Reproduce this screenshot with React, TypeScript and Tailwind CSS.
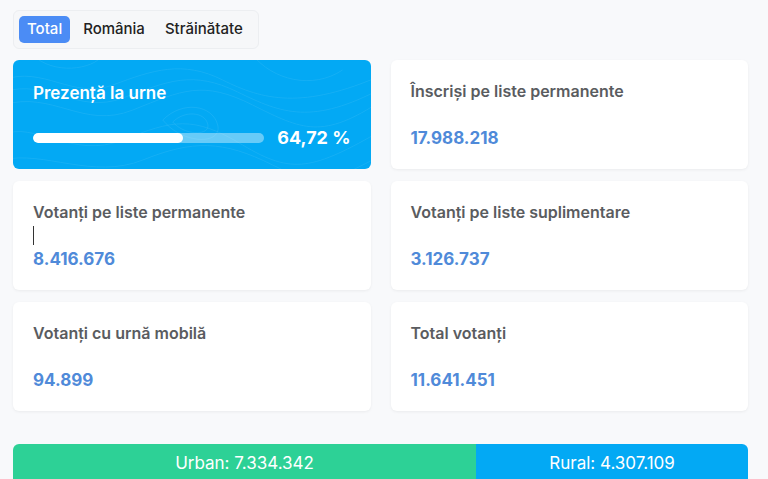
import { useState } from "react";

const stats = [
    { label: "Înscriși pe liste permanente", value: "17.988.218" },
    { label: "Votanți pe liste permanente", value: "8.416.676", caret: true },
    { label: "Votanți pe liste suplimentare", value: "3.126.737" },
    { label: "Votanți cu urnă mobilă", value: "94.899" },
    { label: "Total votanți", value: "11.641.451" },
];

function Topo() {
    // fundal decorativ cu linii de nivel
    return (
        <svg className="absolute inset-0 w-full h-full" viewBox="0 0 358 109" preserveAspectRatio="none" fill="none" stroke="white" strokeOpacity="0.08" strokeWidth="1">
            <path d="M-10 20 C 30 5, 60 40, 100 25 S 170 0, 210 20 S 290 50, 370 15" />
            <path d="M-10 32 C 35 18, 65 55, 110 38 S 180 10, 225 32 S 300 65, 370 28" />
            <path d="M-10 45 C 40 30, 70 70, 120 50 S 190 20, 240 45 S 310 80, 370 40" />
            <path d="M-10 75 C 20 60, 60 100, 110 80 S 180 55, 230 85 S 300 110, 370 70" />
            <path d="M-10 100 C 30 90, 80 120, 130 100 S 210 80, 260 105 S 320 120, 370 95" />
            <path d="M240 -5 C 260 20, 300 30, 330 10" />
            <path d="M20 -5 C 40 15, 80 10, 90 -5" />
            <path d="M150 60 C 170 40, 200 45, 205 65 S 170 85, 150 60" />
            <path d="M160 62 C 172 50, 192 52, 195 64 S 172 76, 160 62" />
        </svg>
    );
}

function StatCard({ label, value, caret }: { label: string; value: string; caret?: boolean }) {
    return (
        <div className="relative bg-white rounded-md shadow-[0_1px_3px_rgba(0,0,0,0.06)] h-[109px] px-5 pt-[19px]">
            <h3 className="text-[16px] font-semibold text-[#5a5c60] leading-[24px]">{label}</h3>
            {caret && <span className="absolute left-5 top-[45px] w-px h-[19px] bg-[#333]" />}
            <p className="mt-[23px] text-[17px] font-bold text-[#4f8ad9] leading-[24px]">{value}</p>
        </div>
    );
}

export default function App() {
    const [tab, setTab] = useState("Total");
    const percent = 64.72;
    const urban = 7334342;
    const total = 11641451;

    return (
        <div className="min-h-screen bg-[#f8f9fb] px-[13px] pt-[10px] overflow-hidden" style={{ fontFamily: "Inter, 'Noto Sans', sans-serif" }}>
            <div className="inline-flex items-center p-[5px] bg-[#f6f7f9] border border-[#eceef1] rounded-md">
                {["Total", "România", "Străinătate"].map(t => (
                    <button key={t} onClick={() => setTab(t)} className={`h-[27px] rounded-[5px] text-[15px] font-medium ${tab === t ? "bg-[#4b8cf5] text-white px-[8px] mr-[3px]" : "text-[#222] px-[10px]"}`}>{t}</button>
                ))}
            </div>

            <div className="grid grid-cols-2 gap-x-[20px] gap-y-[12px] mt-[11px] w-[735px]">
                <div className="relative overflow-hidden bg-[#03a9f4] rounded-md h-[109px] px-5 pt-[20px]">
                    <Topo />
                    <div className="relative">
                        <h3 className="text-[17px] font-semibold text-white leading-[26px]">Prezență la urne</h3>
                        <div className="flex items-center gap-[13px] mt-[19px]">
                            <div className="w-[234px] h-[10px] rounded-full bg-white/40 overflow-hidden">
                                <div className="h-full bg-white rounded-full" style={{ width: `${percent}%` }} />
                            </div>
                            <span className="text-[18px] font-bold text-white whitespace-nowrap leading-[26px]">64,72 %</span>
                        </div>
                    </div>
                </div>
                {stats.map(s => <StatCard key={s.label} {...s} />)}
            </div>

            <div className="flex mt-[33px] w-[735px] h-[40px] rounded-t-md overflow-hidden text-white text-[17px]">
                <div className="flex items-center justify-center bg-[#2dd196]" style={{ width: `${(urban / total) * 100}%` }}>Urban: 7.334.342</div>
                <div className="flex-1 flex items-center justify-center bg-[#03a9f4]">Rural: 4.307.109</div>
            </div>
        </div>
    );
}
